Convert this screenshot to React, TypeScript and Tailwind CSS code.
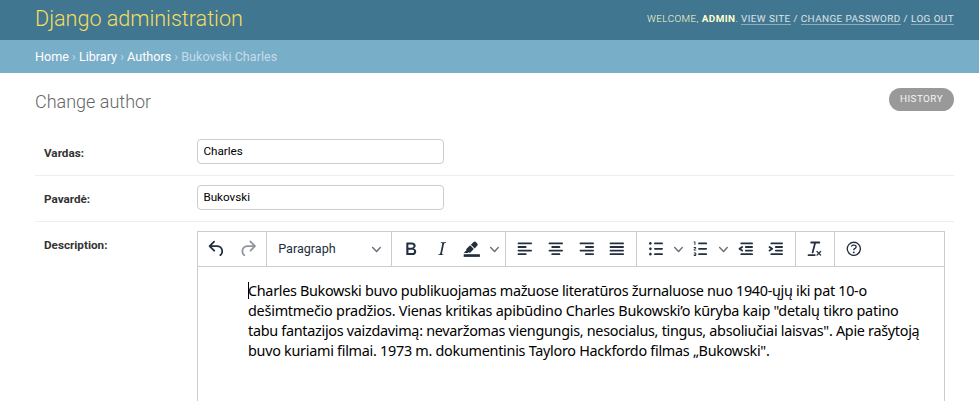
import type { ReactNode } from "react";

function Icon({ children, className = "" }: { children: ReactNode; className?: string }) {
  return (
    <svg viewBox="0 0 24 24" className={`size-[21.6px] shrink-0 fill-[#222f3e] ${className}`}>
      {children}
    </svg>
  );
}

function Button({ children }: { children: ReactNode }) {
  return <div className="flex h-[30.6px] w-[30.6px] items-center justify-center">{children}</div>;
}

function Chevron() {
  return (
    <svg viewBox="0 0 10 10" className="size-[9px] shrink-0 fill-[#222f3e] opacity-70">
      <path d="M8.7 2.2c.3-.3.8-.3 1 0 .4.4.4.9 0 1.2L5.7 7.8c-.3.3-.9.3-1.2 0L.2 3.4a.8.8 0 0 1 0-1.2c.3-.3.8-.3 1.1 0L5 6l3.7-3.8Z" />
    </svg>
  );
}

function SplitButton({ children }: { children: ReactNode }) {
  return (
    <div className="flex h-[30.6px] w-[45px] items-center">
      <Button>{children}</Button>
      <div className="flex w-[14.4px] justify-center">
        <Chevron />
      </div>
    </div>
  );
}

function Group({ children, last = false }: { children: ReactNode; last?: boolean }) {
  return (
    <div className={`flex h-full items-center px-[3.6px] ${last ? "" : "border-r border-[#ccc]"}`}>
      {children}
    </div>
  );
}

function Bars({ rows }: { rows: [number, number][] }) {
  return (
    <Icon>
      {rows.map(([x, w], i) => (
        <rect key={i} x={x} y={5 + i * 4} width={w} height={2} rx={1} />
      ))}
    </Icon>
  );
}

function Toolbar() {
  return (
    <div className="flex h-[35px] items-center border-b border-[#ccc]">
      <Group>
        <Button>
          <Icon>
            <path d="M6.4 8H12c3.7 0 6.2 2 6.8 5.1.6 2.7-.4 5.6-2.3 6.8a1 1 0 0 1-1-1.8c1.1-.6 1.8-2.7 1.4-4.6-.5-2.1-2.1-3.5-4.9-3.5H6.4l3.3 3.3a1 1 0 1 1-1.4 1.4l-5-5a1 1 0 0 1 0-1.4l5-5a1 1 0 0 1 1.4 1.4L6.4 8Z" />
          </Icon>
        </Button>
        <Button>
          <Icon className="opacity-50">
            <path d="M17.6 10H12c-2.8 0-4.4 1.4-4.9 3.5-.4 2 .3 4 1.4 4.6a1 1 0 1 1-1 1.8c-2-1.2-2.9-4.1-2.3-6.8.6-3 3-5.1 6.8-5.1h5.6l-3.3-3.3a1 1 0 1 1 1.4-1.4l5 5a1 1 0 0 1 0 1.4l-5 5a1 1 0 0 1-1.4-1.4l3.3-3.3Z" />
          </Icon>
        </Button>
      </Group>
      <Group>
        <div className="flex h-[30.6px] w-[116.3px] items-center justify-between pr-[6.2px] pl-[7.2px] text-[12.6px] text-[#222f3e]">
          <span>Paragraph</span>
          <Chevron />
        </div>
      </Group>
      <Group>
        <Button>
          <Icon>
            <path d="M7.8 19c-.3 0-.5 0-.6-.2l-.2-.5V5.7c0-.2 0-.4.2-.5l.6-.2h5c1.5 0 2.7.3 3.5 1 .7.6 1.1 1.4 1.1 2.5a3 3 0 0 1-.6 1.9c-.4.6-1 1-1.6 1.2.4.1.9.3 1.3.6s.8.7 1 1.2c.4.4.5 1 .5 1.6 0 1.3-.4 2.3-1.3 3-.8.7-2.1 1-3.8 1H7.8Zm5-8.3c.6 0 1.2-.1 1.6-.5.4-.3.6-.7.6-1.3 0-1.1-.8-1.7-2.3-1.7H9.3v3.5h3.4Zm.5 6c.7 0 1.3-.1 1.7-.4.4-.4.6-.9.6-1.5s-.2-1-.7-1.4c-.4-.3-1-.4-2-.4H9.4v3.8h4Z" />
          </Icon>
        </Button>
        <Button>
          <Icon>
            <path d="m16.7 4.7-.1.9h-.3c-.6 0-1 0-1.4.3-.3.3-.4.6-.5 1.1l-2.1 9.8v.6c0 .5.4.8 1.4.8h.2l-.2.8H8l.2-.8h.2c1.1 0 1.8-.5 2-1.5l2-9.8.1-.5c0-.6-.4-.8-1.4-.8h-.3l.2-.9h5.8Z" />
          </Icon>
        </Button>
        <SplitButton>
          <Icon>
            <path d="M3 18h18v3H3z" />
            <path d="M7.7 16.7H3l3.3-3.3-.7-.8L10.2 8l4 4.1-4 4.2c-.2.2-.6.2-.8 0l-.6-.7-1.1 1.1Zm5-7.5L11 7.4l3-2.9a2 2 0 0 1 2.6 0L18 6c.7.7.7 2 0 2.7l-2.9 2.9-1.8-1.8-.5-.6" />
          </Icon>
        </SplitButton>
      </Group>
      <Group>
        <Button>
          <Bars rows={[[4, 16], [4, 10], [4, 16], [4, 10]]} />
        </Button>
        <Button>
          <Bars rows={[[4, 16], [7, 10], [4, 16], [7, 10]]} />
        </Button>
        <Button>
          <Bars rows={[[4, 16], [10, 10], [4, 16], [10, 10]]} />
        </Button>
        <Button>
          <Bars rows={[[4, 16], [4, 16], [4, 16], [4, 16]]} />
        </Button>
      </Group>
      <Group>
        <SplitButton>
          <Icon>
            <path d="M11 5h8c.6 0 1 .4 1 1s-.4 1-1 1h-8a1 1 0 0 1 0-2Zm0 6h8c.6 0 1 .4 1 1s-.4 1-1 1h-8a1 1 0 0 1 0-2Zm0 6h8c.6 0 1 .4 1 1s-.4 1-1 1h-8a1 1 0 0 1 0-2ZM4.5 6c0-.4.1-.8.4-1 .3-.4.7-.5 1.1-.5.4 0 .8.1 1 .4.4.3.5.7.5 1.1 0 .4-.1.8-.4 1-.3.4-.7.5-1.1.5-.4 0-.8-.1-1-.4-.4-.3-.5-.7-.5-1.1Zm0 6c0-.4.1-.8.4-1 .3-.4.7-.5 1.1-.5.4 0 .8.1 1 .4.4.3.5.7.5 1.1 0 .4-.1.8-.4 1-.3.4-.7.5-1.1.5-.4 0-.8-.1-1-.4-.4-.3-.5-.7-.5-1.1Zm0 6c0-.4.1-.8.4-1 .3-.4.7-.5 1.1-.5.4 0 .8.1 1 .4.4.3.5.7.5 1.1 0 .4-.1.8-.4 1-.3.4-.7.5-1.1.5-.4 0-.8-.1-1-.4-.4-.3-.5-.7-.5-1.1Z" />
          </Icon>
        </SplitButton>
        <SplitButton>
          <Icon>
            <path d="M10 17h8c.6 0 1 .4 1 1s-.4 1-1 1h-8a1 1 0 0 1 0-2Zm0-6h8c.6 0 1 .4 1 1s-.4 1-1 1h-8a1 1 0 0 1 0-2Zm0-6h8c.6 0 1 .4 1 1s-.4 1-1 1h-8a1 1 0 1 1 0-2ZM6 4v3.5c0 .3-.2.5-.5.5a.5.5 0 0 1-.5-.5V5h-.5a.5.5 0 0 1 0-1H6Zm-1 8.8.2.2h1.3c.3 0 .5.2.5.5s-.2.5-.5.5H4.9a1 1 0 0 1-.9-1V13c0-.4.3-.8.6-1l1.2-.4.2-.3a.2.2 0 0 0-.2-.2H4.5a.5.5 0 0 1-.5-.5c0-.3.2-.5.5-.5h1.6c.5 0 .9.4.9 1v.1c0 .4-.3.8-.6 1l-1.2.4-.2.3ZM7 17v2c0 .6-.4 1-1 1H4.5a.5.5 0 0 1 0-1h1.2c.2 0 .3-.1.3-.3 0-.2-.1-.3-.3-.3H4.4a.4.4 0 1 1 0-.8h1.3c.2 0 .3-.1.3-.3 0-.2-.1-.3-.3-.3H4.5a.5.5 0 1 1 0-1H6c.6 0 1 .4 1 1Z" />
          </Icon>
        </SplitButton>
        <Button>
          <Icon>
            <path d="M7 5h12c.6 0 1 .4 1 1s-.4 1-1 1H7a1 1 0 1 1 0-2Zm5 4h7c.6 0 1 .4 1 1s-.4 1-1 1h-7a1 1 0 0 1 0-2Zm0 4h7c.6 0 1 .4 1 1s-.4 1-1 1h-7a1 1 0 0 1 0-2Zm-5 4h12a1 1 0 0 1 0 2H7a1 1 0 0 1 0-2Zm1.6-3.8a1 1 0 0 1-1.2 1.6l-3-2a1 1 0 0 1 0-1.6l3-2a1 1 0 0 1 1.2 1.6L6.8 12l1.8 1.2Z" />
          </Icon>
        </Button>
        <Button>
          <Icon>
            <path d="M7 5h12c.6 0 1 .4 1 1s-.4 1-1 1H7a1 1 0 1 1 0-2Zm5 4h7c.6 0 1 .4 1 1s-.4 1-1 1h-7a1 1 0 0 1 0-2Zm0 4h7c.6 0 1 .4 1 1s-.4 1-1 1h-7a1 1 0 0 1 0-2Zm-5 4h12a1 1 0 0 1 0 2H7a1 1 0 0 1 0-2Zm-2.6-3.8L6.2 12l-1.8-1.2a1 1 0 0 1 1.2-1.6l3 2a1 1 0 0 1 0 1.6l-3 2a1 1 0 1 1-1.2-1.6Z" />
          </Icon>
        </Button>
      </Group>
      <Group>
        <Button>
          <Icon>
            <path d="M13.2 6a1 1 0 0 1 0 .2l-2.6 10a1 1 0 0 1-1 .8h-.2a.8.8 0 0 1-.8-1l2.6-10H8a1 1 0 1 1 0-2h9a1 1 0 0 1 0 2h-3.8ZM5 18h7a1 1 0 0 1 0 2H5a1 1 0 0 1 0-2Zm13 1.5L16.5 18 15 19.5a.7.7 0 0 1-1-1l1.5-1.5-1.5-1.5a.7.7 0 0 1 1-1l1.5 1.5 1.5-1.5a.7.7 0 0 1 1 1L17.5 17l1.5 1.5a.7.7 0 0 1-1 1Z" />
          </Icon>
        </Button>
      </Group>
      <Group last>
        <Button>
          <Icon>
            <path d="M12 5.5a6.5 6.5 0 0 0-6 9 6.3 6.3 0 0 0 1.4 2l1 1a6.3 6.3 0 0 0 3.6 1 6.5 6.5 0 0 0 6-9 6.3 6.3 0 0 0-1.4-2l-1-1a6.3 6.3 0 0 0-3.6-1ZM12 4a7.8 7.8 0 0 1 5.7 2.3A8 8 0 1 1 12 4Z" />
            <path d="M9.6 9.7a.7.7 0 0 1-.7-.8c0-1.1 1.5-1.8 3.2-1.8 1.8 0 3.2.8 3.2 2.4 0 1.4-.4 2.1-1.5 2.8-.2 0-.3.1-.3.2a2 2 0 0 0-.8.8.8.8 0 0 1-1.4-.6c.3-.7.8-1 1.3-1.5l.4-.2c.7-.4.8-.6.8-1.5 0-.5-.6-.9-1.7-.9-.5 0-1 .1-1.4.3-.2 0-.3.1-.3.2v-.2c0 .4-.4.8-.8.8Z" />
            <circle cx="12" cy="16" r="1" />
          </Icon>
        </Button>
      </Group>
    </div>
  );
}

function Row({ label, value }: { label: string; value: string }) {
  return (
    <div className="flex h-[46px] border-b border-[#eee] pt-[9px] pl-[9px]">
      <label className="w-[153px] pt-[7px] text-[11.7px] leading-[15px] font-bold text-[#333]">{label}</label>
      <div className="h-[25px] w-[247px] rounded-[4px] border border-[#ccc] px-[5.4px] text-[11.7px] leading-[23px] text-black">
        {value}
      </div>
    </div>
  );
}

function ToolLink({ children }: { children: ReactNode }) {
  return <span className="border-b border-white/40">{children}</span>;
}

export default function App() {
  return (
    <div className="h-[401px] w-[979px] overflow-hidden bg-white font-[Roboto,sans-serif] text-[#333]">
      <header className="flex h-[40px] items-start justify-between bg-[#417690] pr-[25px] pl-[35px]">
        <h1 className="pt-[5px] text-[21.6px] leading-[27px] font-light tracking-[-0.02px] text-[#f5dd5d]">Django administration</h1>
        <div className="pt-[13px] text-[9.9px] leading-[11px] font-light tracking-[0.42px] whitespace-pre text-[#ffc] uppercase">
          Welcome, <strong className="font-bold">admin</strong>. <span className="font-normal text-white/80"><ToolLink>View site</ToolLink> / <ToolLink>Change password</ToolLink> / <ToolLink>Log out</ToolLink></span>
        </div>
      </header>
      <nav className="h-[33px] bg-[#79aec8] pl-[35px] text-[12.6px] leading-[33px] text-[#c4dce8]">
        <span className="text-white">Home</span> › <span className="text-white">Library</span> ›{" "}
        <span className="text-white">Authors</span> › Bukovski Charles
      </nav>
      <main className="pr-[25px] pl-[35px]">
        <div className="flex h-[57px] items-start justify-between pt-[15px]">
          <h2 className="pt-[2px] text-[18px] leading-[24px] font-light text-[#666]">Change author</h2>
          <div className="h-[23px] w-[65px] rounded-full bg-[#999] text-center text-[9.9px] leading-[21px] tracking-[0.45px] text-white/90">
            HISTORY
          </div>
        </div>
        <Row label="Vardas:" value="Charles" />
        <Row label="Pavardė:" value="Bukovski" />
        <div className="flex pt-[9px] pl-[9px]">
          <label className="w-[153px] pt-[7px] text-[11.7px] leading-[15px] font-bold text-[#333]">Description:</label>
          <div className="h-[180px] w-[748px] border border-[#ccc]">
            <Toolbar />
            <div className="ml-[50px] flex pt-[14px] font-['Noto_Sans',sans-serif] text-[14.4px] leading-[20px] whitespace-nowrap text-black">
              <div className="mt-px -mr-px h-[17px] w-px bg-black" />
              <div>
                <div className="tracking-[-0.31px]">Charles Bukowski buvo publikuojamas mažuose literatūros žurnaluose nuo 1940-ųjų iki pat 10-o</div>
                <div className="tracking-[-0.235px]">dešimtmečio pradžios. Vienas kritikas apibūdino Charles Bukowski’o kūryba kaip "detalų tikro patino</div>
                <div className="tracking-[-0.295px]">tabu fantazijos vaizdavimą: nevaržomas viengungis, nesocialus, tingus, absoliučiai laisvas". Apie rašytoją</div>
                <div className="tracking-[-0.28px]">buvo kuriami filmai. 1973 m. dokumentinis Tayloro Hackfordo filmas „Bukowski".</div>
              </div>
            </div>
          </div>
        </div>
      </main>
    </div>
  );
}
